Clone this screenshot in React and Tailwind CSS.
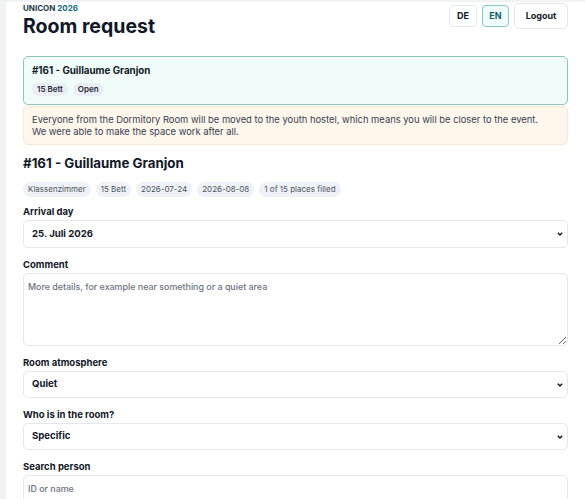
import { useState } from "react";

function Chevron() {
  return (
    <svg
      className="pointer-events-none absolute right-[4px] top-1/2 -translate-y-1/2"
      width="8"
      height="6"
      viewBox="0 0 8 6"
      fill="none"
    >
      <path d="M1.8 1.8L4 4L6.2 1.8" stroke="#111827" strokeWidth="1.5" />
    </svg>
  );
}

function Field({ label, children }) {
  return (
    <div className="flex flex-col">
      <label className="text-[9.5px] font-bold leading-[14px] text-[#111827] mb-px">{label}</label>
      {children}
    </div>
  );
}

function Select({ value, options, tall }) {
  return (
    <div className="relative">
      <select
        defaultValue={value}
        className={
          tall
            ? "block appearance-none w-full h-[28px] rounded-[5px] border border-[#e6e7ea] bg-white pl-[8px] text-[9.6px] font-bold text-[#111827] outline-none"
            : "block appearance-none w-full h-[27px] rounded-[5px] border border-[#e6e7ea] bg-white pl-[8px] text-[9.6px] font-bold text-[#111827] outline-none"
        }
      >
        {options.map((o) => (
          <option key={o}>{o}</option>
        ))}
      </select>
      <Chevron />
    </div>
  );
}

export default function App() {
  const [lang, setLang] = useState("EN");
  const tags = ["Klassenzimmer", "15 Bett", "2026-07-24", "2026-08-08", "1 of 15 places filled"];

  return (
    <div
      className="min-h-screen bg-[#f1f2f4] pl-[6px] pt-[2px]"
      style={{ fontFamily: "Inter, 'Noto Sans', sans-serif" }}
    >
      <div className="bg-white min-h-[497px] px-[17px]">
        {/* header */}
        <div className="flex justify-between items-start">
          <div>
            <p className="text-[8px] font-bold leading-[11px] text-[#1d3b45] pt-px">
              UNICON <span className="text-[#0e6c79]">2026</span>
            </p>
            <h1 className="text-[19.5px] font-bold leading-[24px] text-[#111827]">Room request</h1>
          </div>
          <div className="flex items-center gap-[5px] mt-px">
            {["DE", "EN"].map((l) => (
              <button
                key={l}
                onClick={() => setLang(l)}
                className={
                  lang === l
                    ? "h-[22px] w-[27px] rounded-[4px] border border-[#8cc7c6] bg-[#effcfc] text-[9px] font-bold text-[#0e5f6b]"
                    : "h-[22px] w-[28px] rounded-[4px] border border-[#e6e7ea] bg-white text-[9px] font-bold text-[#111827]"
                }
              >
                {l}
              </button>
            ))}
            <button className="h-[26px] w-[54px] rounded-[5px] border border-[#e6e7ea] bg-white text-[9px] font-bold text-[#111827]">
              Logout
            </button>
          </div>
        </div>

        {/* current request */}
        <div className="mt-[18px] rounded-[5px] border border-[#8dc6b6] bg-[#effcf9] px-[8px] pt-[7px] pb-[8px]">
          <p className="text-[9.8px] font-bold leading-[14px] text-[#111827]">#161 - Guillaume Granjon</p>
          <div className="flex gap-[5px] mt-[5px]">
            <span className="h-[13px] px-[5px] rounded-full bg-[#eaedf3] text-[8px] font-semibold leading-[13px] text-[#1f2937]">15 Bett</span>
            <span className="h-[13px] px-[5px] rounded-full bg-[#eaedf3] text-[8px] font-semibold leading-[13px] text-[#1f2937]">Open</span>
          </div>
        </div>
        <div className="mt-px rounded-[5px] border border-[#fbe6cf] bg-[#fff6ec] px-[8px] py-[7px] text-[9.4px] leading-[11.5px] text-[#374151]">
          Everyone from the Dormitory Room will be moved to the youth hostel, which means you will be closer to the event.
          <br />
          We were able to make the space work after all.
        </div>

        {/* room */}
        <h2 className="mt-[8px] text-[13.3px] font-bold leading-[20px] text-[#111827]">#161 - Guillaume Granjon</h2>
        <div className="mt-[9px] flex gap-[5px]">
          {tags.map((t) => (
            <span key={t} className="h-[15px] px-[5px] rounded-full bg-[#eef1f5] text-[8px] leading-[15px] text-[#4b5563]">
              {t}
            </span>
          ))}
        </div>

        <div className="mt-[8px] flex flex-col gap-[10px]">
          <Field label="Arrival day">
            <Select tall value="25. Juli 2026" options={["24. Juli 2026", "25. Juli 2026", "26. Juli 2026"]} />
          </Field>
          <Field label="Comment">
            <textarea
              placeholder="More details, for example near something or a quiet area"
              className="block h-[73px] w-full rounded-[5px] border border-[#e6e7ea] bg-white px-[4px] pt-[6px] text-[8.9px] font-medium text-[#111827] placeholder:text-[#6b7280] outline-none"
            />
          </Field>
          <Field label="Room atmosphere">
            <Select value="Quiet" options={["Quiet", "Lively"]} />
          </Field>
          <Field label="Who is in the room?">
            <Select value="Specific" options={["Anyone", "Specific"]} />
          </Field>
          <Field label="Search person">
            <input
              placeholder="ID or name"
              className="block h-[27px] w-full rounded-[5px] border border-[#e6e7ea] bg-white px-[4px] text-[8.9px] font-medium text-[#111827] placeholder:text-[#6b7280] outline-none"
            />
          </Field>
        </div>
      </div>
    </div>
  );
}
